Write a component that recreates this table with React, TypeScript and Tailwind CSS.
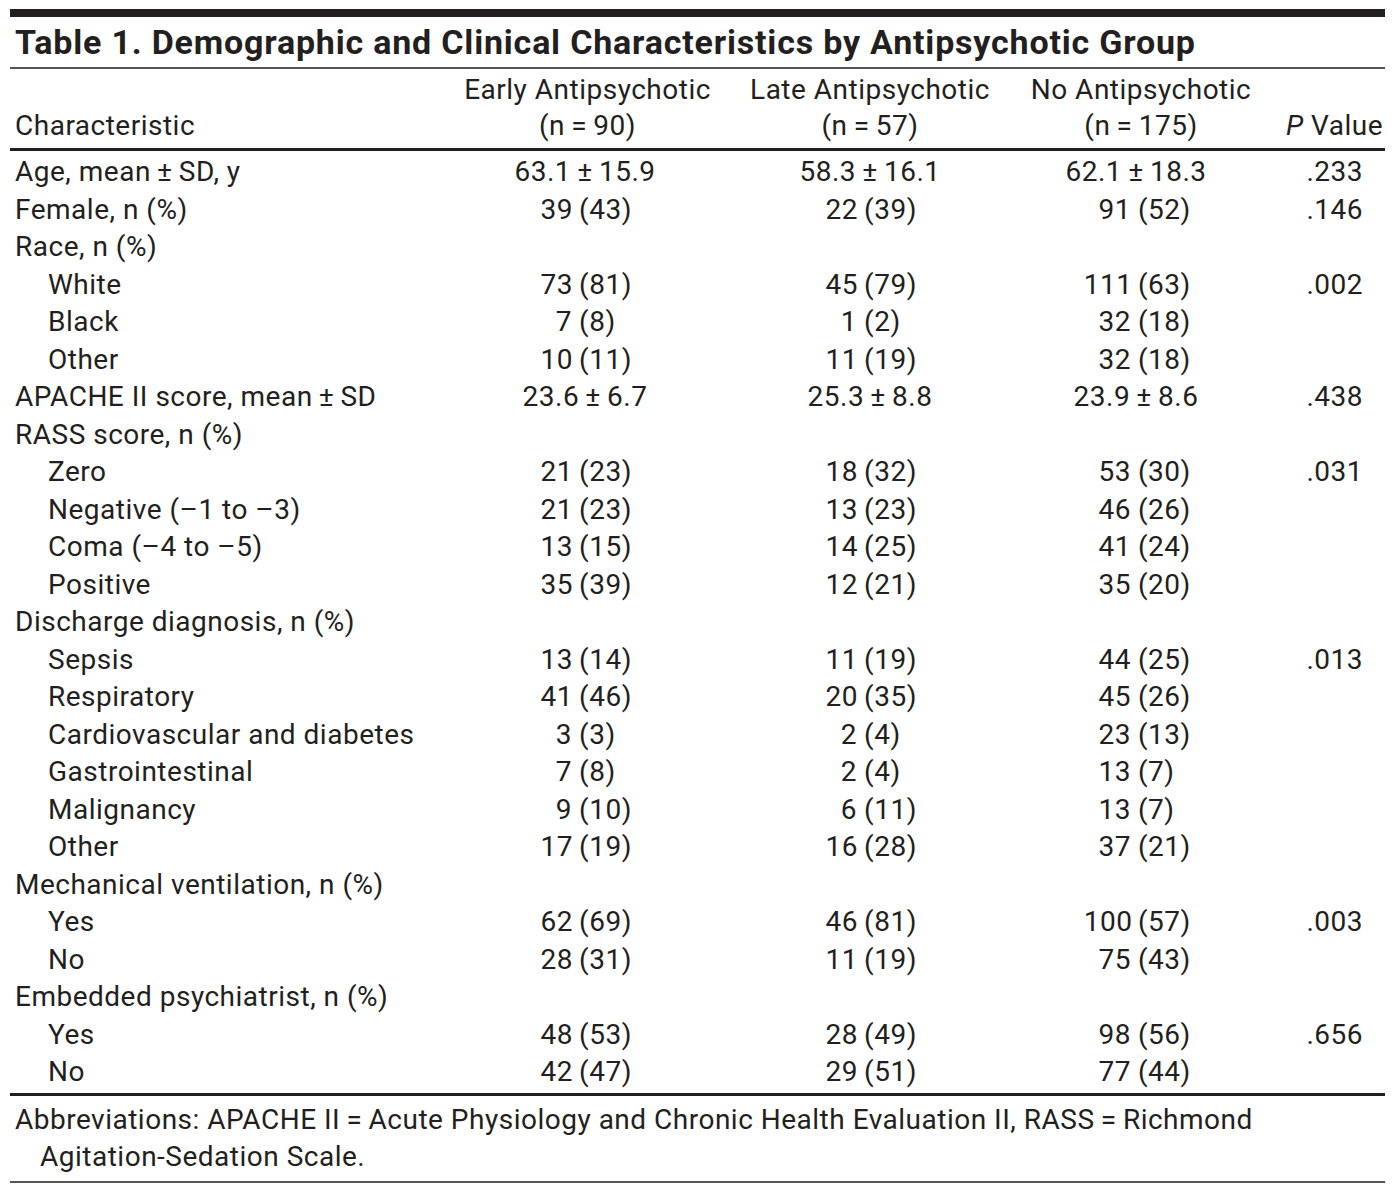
import React from "react";

type Pct = { n: string; pct: string };
type Cell = Pct | string;

type Row = {
  label: string;
  sub?: boolean;
  cells?: [Cell, Cell, Cell];
  p?: string;
};

const T = "\u2009";

const rows: Row[] = [
  { label: `Age, mean${T}±${T}SD, y`, cells: [`63.1${T}±${T}15.9`, `58.3${T}±${T}16.1`, `62.1${T}±${T}18.3`], p: ".233" },
  { label: "Female, n (%)", cells: [{ n: "39", pct: "43" }, { n: "22", pct: "39" }, { n: "91", pct: "52" }], p: ".146" },
  { label: "Race, n (%)" },
  { label: "White", sub: true, cells: [{ n: "73", pct: "81" }, { n: "45", pct: "79" }, { n: "111", pct: "63" }], p: ".002" },
  { label: "Black", sub: true, cells: [{ n: "7", pct: "8" }, { n: "1", pct: "2" }, { n: "32", pct: "18" }] },
  { label: "Other", sub: true, cells: [{ n: "10", pct: "11" }, { n: "11", pct: "19" }, { n: "32", pct: "18" }] },
  { label: `APACHE II score, mean${T}±${T}SD`, cells: [`23.6${T}±${T}6.7`, `25.3${T}±${T}8.8`, `23.9${T}±${T}8.6`], p: ".438" },
  { label: "RASS score, n (%)" },
  { label: "Zero", sub: true, cells: [{ n: "21", pct: "23" }, { n: "18", pct: "32" }, { n: "53", pct: "30" }], p: ".031" },
  { label: "Negative (–1 to –3)", sub: true, cells: [{ n: "21", pct: "23" }, { n: "13", pct: "23" }, { n: "46", pct: "26" }] },
  { label: "Coma (–4 to –5)", sub: true, cells: [{ n: "13", pct: "15" }, { n: "14", pct: "25" }, { n: "41", pct: "24" }] },
  { label: "Positive", sub: true, cells: [{ n: "35", pct: "39" }, { n: "12", pct: "21" }, { n: "35", pct: "20" }] },
  { label: "Discharge diagnosis, n (%)" },
  { label: "Sepsis", sub: true, cells: [{ n: "13", pct: "14" }, { n: "11", pct: "19" }, { n: "44", pct: "25" }], p: ".013" },
  { label: "Respiratory", sub: true, cells: [{ n: "41", pct: "46" }, { n: "20", pct: "35" }, { n: "45", pct: "26" }] },
  { label: "Cardiovascular and diabetes", sub: true, cells: [{ n: "3", pct: "3" }, { n: "2", pct: "4" }, { n: "23", pct: "13" }] },
  { label: "Gastrointestinal", sub: true, cells: [{ n: "7", pct: "8" }, { n: "2", pct: "4" }, { n: "13", pct: "7" }] },
  { label: "Malignancy", sub: true, cells: [{ n: "9", pct: "10" }, { n: "6", pct: "11" }, { n: "13", pct: "7" }] },
  { label: "Other", sub: true, cells: [{ n: "17", pct: "19" }, { n: "16", pct: "28" }, { n: "37", pct: "21" }] },
  { label: "Mechanical ventilation, n (%)" },
  { label: "Yes", sub: true, cells: [{ n: "62", pct: "69" }, { n: "46", pct: "81" }, { n: "100", pct: "57" }], p: ".003" },
  { label: "No", sub: true, cells: [{ n: "28", pct: "31" }, { n: "11", pct: "19" }, { n: "75", pct: "43" }] },
  { label: "Embedded psychiatrist, n (%)" },
  { label: "Yes", sub: true, cells: [{ n: "48", pct: "53" }, { n: "28", pct: "49" }, { n: "98", pct: "56" }], p: ".656" },
  { label: "No", sub: true, cells: [{ n: "42", pct: "47" }, { n: "29", pct: "51" }, { n: "77", pct: "44" }] },
];

// per-column tweaks so the numbers sit where the print has them
const numWidth = ["w-[2ch]", "w-[2ch]", "w-[3ch]"];
const shift = ["pr-[5px]", "pr-0", "pr-[10px]"];

const DataCell = ({ cell, col }: { cell?: Cell; col: number }) => {
  if (!cell) return <div />;
  if (typeof cell === "string") {
    return <div className={`text-center ${shift[col]}`}>{cell}</div>;
  }
  return (
    <div className={`flex justify-center gap-[7px] ${shift[col]}`}>
      <span className={`${numWidth[col]} text-right`}>{cell.n}</span>
      <span className="w-[3.2ch] text-left whitespace-nowrap">({cell.pct})</span>
    </div>
  );
};

const App: React.FC = () => {
  return (
    <div className="w-[1398px] h-[1197px] bg-white text-[#231f20] font-[family-name:Roboto,sans-serif] text-[28px] tracking-[0.5px]">
      <div className="ml-[10px] w-[1375px] pt-[9px]">
        <div className="h-[8px] bg-[#231f20]" />
        <div className="h-[50px] flex items-center pl-[5px] text-[34px] font-bold tracking-[0.8px] whitespace-nowrap">
          Table 1. Demographic and Clinical Characteristics by Antipsychotic Group
        </div>
        <div className="h-[2px] bg-[#555555]" />

        {/* column heads */}
        <div className="grid grid-cols-[430px_295px_270px_272px_108px] leading-[36px] pt-[3px] pb-[4px]">
          <div className="flex flex-col justify-end pl-[5px]">Characteristic</div>
          <div className="flex flex-col items-center">
            <span>Early Antipsychotic</span>
            <span>(n{T}={T}90)</span>
          </div>
          <div className="flex flex-col items-center">
            <span>Late Antipsychotic</span>
            <span>(n{T}={T}57)</span>
          </div>
          <div className="flex flex-col items-center">
            <span>No Antipsychotic</span>
            <span>(n{T}={T}175)</span>
          </div>
          <div className="flex flex-col justify-end items-end pr-[2px] whitespace-nowrap">
            <span>
              <i>P</i> Value
            </span>
          </div>
        </div>
        <div className="h-[3px] bg-[#231f20]" />

        {/* body */}
        <div className="pt-[2px] pb-[2px]">
          {rows.map((row, i) => (
            <div
              key={i}
              className="grid grid-cols-[430px_295px_270px_272px_108px] h-[37.5px] items-center leading-[37.5px]"
            >
              <div className={`whitespace-nowrap ${row.sub ? "pl-[38px]" : "pl-[5px]"}`}>{row.label}</div>
              <DataCell cell={row.cells?.[0]} col={0} />
              <DataCell cell={row.cells?.[1]} col={1} />
              <DataCell cell={row.cells?.[2]} col={2} />
              <div className="text-right pr-[22px]">{row.p}</div>
            </div>
          ))}
        </div>
        <div className="h-[3px] bg-[#231f20]" />

        <div className="pt-[5px] pb-[6px] pl-[5px] leading-[37px]">
          <div>
            Abbreviations: APACHE II{T}={T}Acute Physiology and Chronic Health Evaluation II, RASS{T}={T}Richmond
          </div>
          <div className="pl-[25px]">Agitation-Sedation Scale.</div>
        </div>
        <div className="h-[2px] bg-[#555555]" />
      </div>
    </div>
  );
};

export default App;
